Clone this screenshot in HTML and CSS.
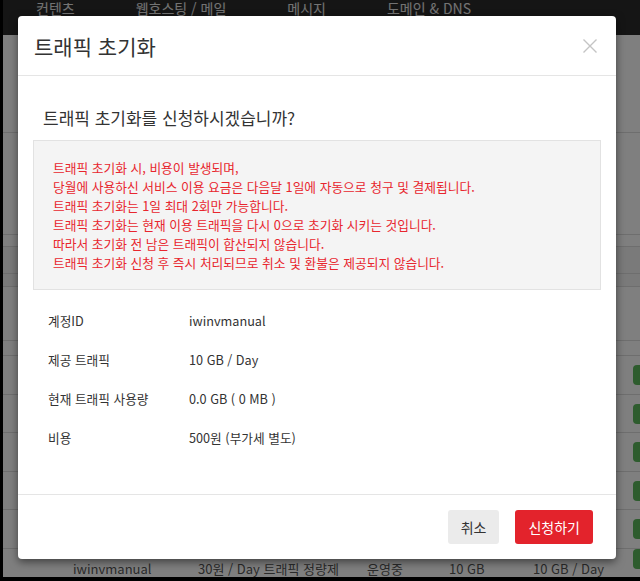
FILE: index.html
```
<!DOCTYPE html>
<html lang="ko">
<head>
<meta charset="utf-8">
<title>트래픽 초기화</title>
<link rel="stylesheet" href="styles.css">
</head>
<body>
<div class="page">
  <div class="topnav">
    <span class="nav-item">컨텐츠</span>
    <span class="nav-item">웹호스팅 / 메일</span>
    <span class="nav-item">메시지</span>
    <span class="nav-item">도메인 &amp; DNS</span>
  </div>
  <div class="bg-content">
    <div class="bg-block h98"></div>
    <div class="bg-block h102"></div>
    <div class="bg-block h12"></div>
    <div class="bg-block h27 shade"></div>
    <div class="bg-block h13 shade"></div>
    <div class="bg-block h54"></div>
    <div class="bg-block h15"></div>
    <div class="bg-row"><span class="badge"></span></div>
    <div class="bg-row"><span class="badge"></span></div>
    <div class="bg-row"><span class="badge"></span></div>
    <div class="bg-row"><span class="badge"></span></div>
    <div class="bg-row"><span class="badge"></span></div>
    <div class="bg-row last">
      <span class="cell">iwinvmanual</span>
      <span class="cell">30원 / Day 트래픽 정량제</span>
      <span class="cell">운영중</span>
      <span class="cell">10 GB</span>
      <span class="cell">10 GB / Day</span>
      <span class="badge"></span>
    </div>
  </div>
  <div class="overlay"></div>
</div>

<div class="modal">
  <div class="modal-header">
    <h4 class="modal-title">트래픽 초기화</h4>
    <svg class="close" width="14" height="14" viewBox="0 0 14 14" aria-label="닫기">
      <path d="M0.5 0.5 L13.5 13.5 M13.5 0.5 L0.5 13.5" stroke="#c4c4c4" stroke-width="1.4" fill="none"/>
    </svg>
  </div>
  <div class="modal-body">
    <p class="question">트래픽 초기화를 신청하시겠습니까?</p>
    <div class="notice">
      <p>트래픽 초기화 시, 비용이 발생되며,</p>
      <p>당월에 사용하신 서비스 이용 요금은 다음달 1일에 자동으로 청구 및 결제됩니다.</p>
      <p>트래픽 초기화는 1일 최대 2회만 가능합니다.</p>
      <p>트래픽 초기화는 현재 이용 트래픽을 다시 0으로 초기화 시키는 것입니다.</p>
      <p>따라서 초기화 전 남은 트래픽이 합산되지 않습니다.</p>
      <p>트래픽 초기화 신청 후 즉시 처리되므로 취소 및 환불은 제공되지 않습니다.</p>
    </div>
    <div class="info">
      <div class="info-row"><span class="label">계정ID</span><span class="value">iwinvmanual</span></div>
      <div class="info-row"><span class="label">제공 트래픽</span><span class="value">10 GB / Day</span></div>
      <div class="info-row"><span class="label">현재 트래픽 사용량</span><span class="value">0.0 GB ( 0 MB )</span></div>
      <div class="info-row"><span class="label">비용</span><span class="value">500원 (부가세 별도)</span></div>
    </div>
  </div>
  <div class="modal-footer">
    <button class="btn btn-cancel">취소</button>
    <button class="btn btn-primary">신청하기</button>
  </div>
</div>
</body>
</html>
```
FILE: styles.css
```
html, body {
  margin: 0;
  padding: 0;
  background: #000;
  overflow: hidden;
  font-family: "Noto Sans CJK KR", "Noto Sans", sans-serif;
}

.page {
  position: relative;
  margin-left: 3px;
  width: 637px;
  height: 577px;
  background: #fff;
  overflow: hidden;
}

.topnav {
  height: 35px;
  background: #2b2b2b;
  display: flex;
  align-items: flex-start;
  gap: 61px;
  padding-left: 33px;
}

.nav-item {
  color: #e6e6e6;
  font-size: 14px;
  line-height: 16px;
  white-space: nowrap;
}

.bg-block {
  border-bottom: 1px solid #dcdcdc;
  box-sizing: border-box;
}
.h98 { height: 98px; }
.h102 { height: 102px; }
.h12 { height: 12px; }
.h27 { height: 27px; }
.h13 { height: 13px; }
.h54 { height: 54px; }
.h15 { height: 15px; }
.shade { background: #f4f4f4; }

.bg-row {
  position: relative;
  height: 38.5px;
  box-sizing: border-box;
  border-bottom: 1px solid #dcdcdc;
  font-size: 13px;
  color: #555;
}

.bg-row.last {
  height: 30px;
  border-bottom: none;
  display: grid;
  grid-template-columns: 70px 125px 169px 82px 84px;
  align-items: end;
}

.cell {
  grid-row: 1;
  white-space: nowrap;
  line-height: 20px;
}
.cell:nth-child(1) { grid-column: 2; }
.cell:nth-child(2) { grid-column: 3; }
.cell:nth-child(3) { grid-column: 4; }
.cell:nth-child(4) { grid-column: 5; }
.cell:nth-child(5) { grid-column: 6; }

.badge {
  position: absolute;
  left: 630px;
  top: 9px;
  width: 30px;
  height: 20px;
  border-radius: 4px;
  background: #5cb85c;
}

.bg-row.last .badge { top: 0; }

.overlay {
  position: absolute;
  inset: 0;
  background: rgba(0, 0, 0, 0.5);
}

.modal {
  position: absolute;
  left: 18px;
  top: 16px;
  width: 598px;
  background: #fff;
  border-radius: 4px;
  box-shadow: 0 3px 9px rgba(0, 0, 0, 0.5);
  color: #333;
}

.modal-header {
  height: 59px;
  border-bottom: 1px solid #e5e5e5;
  display: flex;
  align-items: center;
  justify-content: space-between;
  padding: 0 19px 0 16px;
}

.modal-title {
  margin: 0;
  font-size: 21px;
  font-weight: 400;
  line-height: 28px;
  color: #333;
}

.close { display: block; margin-top: 1px; }

.modal-body {
  padding: 31px 15px 37px;
}

.question {
  margin: 0 0 11px 10px;
  font-size: 17px;
  line-height: 22px;
  color: #333;
}

.notice {
  background: #f4f4f4;
  border: 1px solid #e2e2e2;
  padding: 17px 19px;
  color: #e8262e;
  font-size: 12.75px;
  line-height: 19px;
}

.notice p { margin: 0; }

.info {
  margin-top: 11px;
}

.info-row {
  display: flex;
  align-items: center;
  height: 39px;
  padding-left: 15px;
  font-size: 12.7px;
  color: #333;
}

.label { width: 141px; }

.modal-footer {
  border-top: 1px solid #e5e5e5;
  padding: 15px 23px 15px;
  display: flex;
  justify-content: flex-end;
  gap: 16px;
}

.btn {
  height: 34px;
  border: none;
  border-radius: 3px;
  padding: 0 13px;
  font-family: inherit;
  font-size: 14px;
  line-height: 34px;
}

.btn-cancel {
  background: #ebebeb;
  color: #333;
}

.btn-primary {
  background: #e3232c;
  color: #fff;
}
```
